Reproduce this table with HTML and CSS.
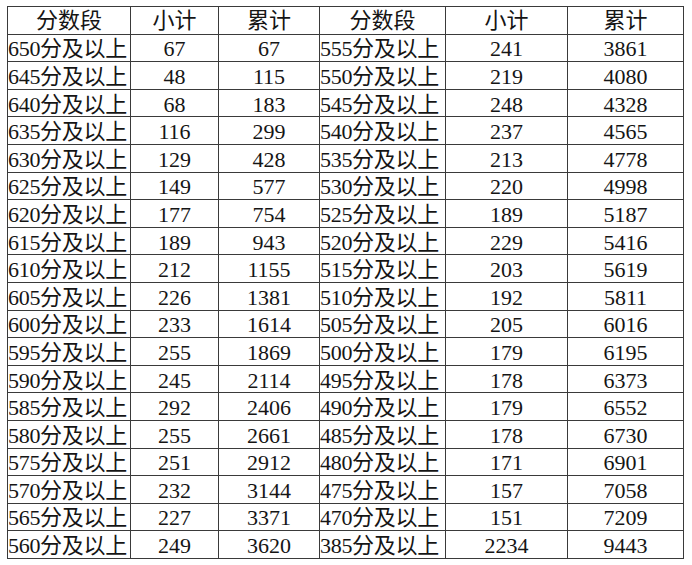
FILE: index.html
```html
<!DOCTYPE html>
<html lang="zh">
<head>
<meta charset="utf-8">
<link rel="stylesheet" href="styles.css">
</head>
<body>
<div class="score-table">
<div class="cell head">分数段</div><div class="cell head">小计</div><div class="cell head">累计</div><div class="cell head">分数段</div><div class="cell head">小计</div><div class="cell head">累计</div>
<div class="cell seg">650分及以上</div><div class="cell">67</div><div class="cell">67</div><div class="cell seg">555分及以上</div><div class="cell">241</div><div class="cell">3861</div>
<div class="cell seg">645分及以上</div><div class="cell">48</div><div class="cell">115</div><div class="cell seg">550分及以上</div><div class="cell">219</div><div class="cell">4080</div>
<div class="cell seg">640分及以上</div><div class="cell">68</div><div class="cell">183</div><div class="cell seg">545分及以上</div><div class="cell">248</div><div class="cell">4328</div>
<div class="cell seg">635分及以上</div><div class="cell">116</div><div class="cell">299</div><div class="cell seg">540分及以上</div><div class="cell">237</div><div class="cell">4565</div>
<div class="cell seg">630分及以上</div><div class="cell">129</div><div class="cell">428</div><div class="cell seg">535分及以上</div><div class="cell">213</div><div class="cell">4778</div>
<div class="cell seg">625分及以上</div><div class="cell">149</div><div class="cell">577</div><div class="cell seg">530分及以上</div><div class="cell">220</div><div class="cell">4998</div>
<div class="cell seg">620分及以上</div><div class="cell">177</div><div class="cell">754</div><div class="cell seg">525分及以上</div><div class="cell">189</div><div class="cell">5187</div>
<div class="cell seg">615分及以上</div><div class="cell">189</div><div class="cell">943</div><div class="cell seg">520分及以上</div><div class="cell">229</div><div class="cell">5416</div>
<div class="cell seg">610分及以上</div><div class="cell">212</div><div class="cell">1155</div><div class="cell seg">515分及以上</div><div class="cell">203</div><div class="cell">5619</div>
<div class="cell seg">605分及以上</div><div class="cell">226</div><div class="cell">1381</div><div class="cell seg">510分及以上</div><div class="cell">192</div><div class="cell">5811</div>
<div class="cell seg">600分及以上</div><div class="cell">233</div><div class="cell">1614</div><div class="cell seg">505分及以上</div><div class="cell">205</div><div class="cell">6016</div>
<div class="cell seg">595分及以上</div><div class="cell">255</div><div class="cell">1869</div><div class="cell seg">500分及以上</div><div class="cell">179</div><div class="cell">6195</div>
<div class="cell seg">590分及以上</div><div class="cell">245</div><div class="cell">2114</div><div class="cell seg">495分及以上</div><div class="cell">178</div><div class="cell">6373</div>
<div class="cell seg">585分及以上</div><div class="cell">292</div><div class="cell">2406</div><div class="cell seg">490分及以上</div><div class="cell">179</div><div class="cell">6552</div>
<div class="cell seg">580分及以上</div><div class="cell">255</div><div class="cell">2661</div><div class="cell seg">485分及以上</div><div class="cell">178</div><div class="cell">6730</div>
<div class="cell seg">575分及以上</div><div class="cell">251</div><div class="cell">2912</div><div class="cell seg">480分及以上</div><div class="cell">171</div><div class="cell">6901</div>
<div class="cell seg">570分及以上</div><div class="cell">232</div><div class="cell">3144</div><div class="cell seg">475分及以上</div><div class="cell">157</div><div class="cell">7058</div>
<div class="cell seg">565分及以上</div><div class="cell">227</div><div class="cell">3371</div><div class="cell seg">470分及以上</div><div class="cell">151</div><div class="cell">7209</div>
<div class="cell seg">560分及以上</div><div class="cell">249</div><div class="cell">3620</div><div class="cell seg">385分及以上</div><div class="cell">2234</div><div class="cell">9443</div>
</div>
</body>
</html>
```

FILE: styles.css
```css
html, body {
  margin: 0;
  padding: 0;
  background: #ffffff;
}

body {
  padding: 6px 0 0 7px;
  font-family: "Liberation Serif", "Noto Sans CJK SC", serif;
  color: #151515;
}

.score-table {
  display: grid;
  grid-template-columns: 123px 88px 101px 126px 122px 116px;
  grid-template-rows: repeat(20, 27.6px);
  width: 677px;
  box-sizing: border-box;
  border-top: 1px solid #3a3a3a;
  border-left: 1px solid #3a3a3a;
  font-size: 22px;
  line-height: 22px;
}

.cell {
  border-right: 1px solid #3a3a3a;
  border-bottom: 1px solid #3a3a3a;
  display: flex;
  align-items: center;
  justify-content: center;
  padding-top: 3px;
  box-sizing: border-box;
  white-space: nowrap;
  overflow: hidden;
}

.cell.head {
  padding-top: 1px;
}

.cell.seg {
  justify-content: flex-start;
  letter-spacing: -0.3px;
}
```
